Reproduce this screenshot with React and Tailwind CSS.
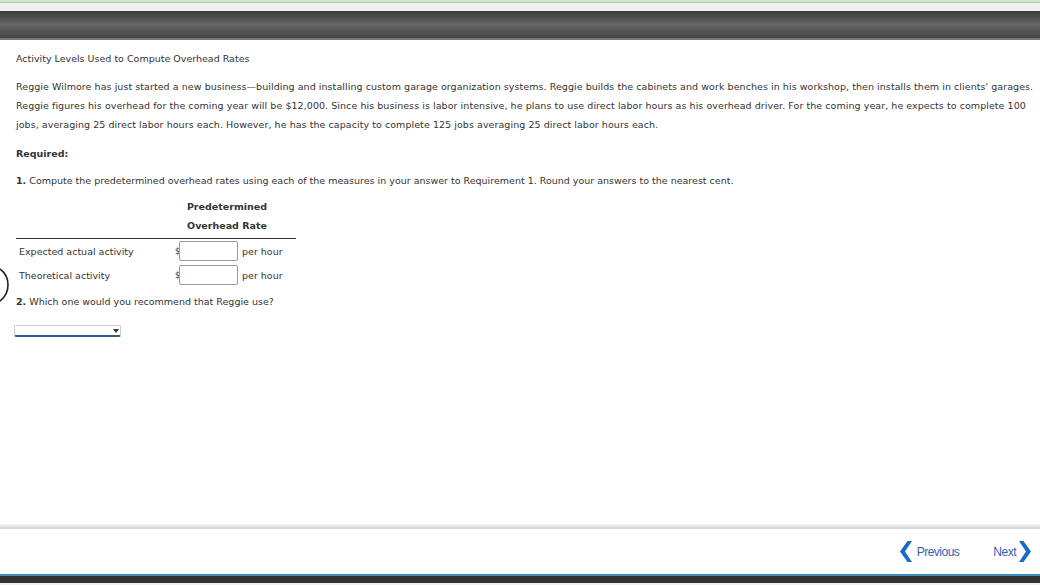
const rows = [
  { label: "Expected actual activity" },
  { label: "Theoretical activity" },
];

function Chevron({ dir }) {
  return (
    <svg width="12" height="21" viewBox="0 0 12 21">
      <path
        d={dir === "left" ? "M12 0 L5 10.5 L12 21 L7.5 21 L0 10.5 L7.5 0 Z" : "M0 0 L7 10.5 L0 21 L4.5 21 L12 10.5 L4.5 0 Z"}
        fill="#1a6cc2"
      />
    </svg>
  );
}

export default function App() {
  return (
    <div className="relative w-[1040px] h-[585px] overflow-hidden bg-white text-[#333] font-['DejaVu_Sans',Verdana,sans-serif] flex flex-col">
      {/* top strips */}
      <div className="h-[3px] bg-[#cfe6cf] border-b border-[#a9c9a9]" />
      <div className="h-[8px] bg-[#f0f0f0]" />
      <div className="h-[29px] bg-gradient-to-b from-[#3a3a3a] via-[#666] to-[#444] border-b-2 border-[#777]" />

      {/* content */}
      <div className="flex-1 pl-4 pr-[3px] pt-[9px] text-[9.5px] leading-[19px]">
        <p>Activity Levels Used to Compute Overhead Rates</p>
        <p className="mt-[9px] tracking-[0.06px]">
          Reggie Wilmore has just started a new business—building and installing custom garage organization systems. Reggie builds the cabinets and work benches in his workshop, then installs them in clients' garages. Reggie figures his overhead for the coming year will be $12,000. Since his business is labor intensive, he plans to use direct labor hours as his overhead driver. For the coming year, he expects to complete 100 jobs, averaging 25 direct labor hours each. However, he has the capacity to complete 125 jobs averaging 25 direct labor hours each.
        </p>
        <p className="mt-[10px] font-bold">Required:</p>
        <p className="mt-[8px]">
          <b>1.</b> Compute the predetermined overhead rates using each of the measures in your answer to Requirement 1. Round your answers to the nearest cent.
        </p>

        <div className="mt-[7px] w-[280px]">
          <div className="border-b border-[#333] pl-[166px] pb-[3px] font-bold text-center whitespace-nowrap">
            <div className="w-[90px]">Predetermined</div>
            <div className="w-[90px]">Overhead Rate</div>
          </div>
          {rows.map((r) => (
            <div key={r.label} className="flex items-center h-[24px] pl-[3px]">
              <span className="w-[156px]">{r.label}</span>
              <span className="text-[8px] w-[4px]">$</span>
              <input
                type="text"
                className="w-[59px] h-[20px] border border-[#999] rounded-[2px] bg-white"
              />
              <span className="ml-[4px]">per hour</span>
            </div>
          ))}
        </div>

        <p className="mt-[5px]">
          <b>2.</b> Which one would you recommend that Reggie use?
        </p>
        <div className="mt-[14px] -ml-[2px] w-[107px] h-[12px] border border-[#ccc] border-b-2 border-b-[#2e5f8a] rounded-[2px] flex justify-end items-center pr-[1px]">
          <svg width="6" height="4" viewBox="0 0 6 4">
            <path d="M0 0 L6 0 L3 4 Z" fill="#333" />
          </svg>
        </div>
      </div>

      {/* partial circle at left edge */}
      <svg className="absolute left-0 top-[267px]" width="11" height="36" viewBox="0 0 11 36">
        <path d="M0 2 A20 20 0 0 1 0 34" fill="none" stroke="#222" strokeWidth="1.6" />
      </svg>

      {/* footer */}
      <div className="h-[5px] bg-gradient-to-b from-[#f4f4f4] to-[#d2d2d2]" />
      <div className="h-[45px] flex items-center justify-end pr-[9px] gap-[34px] text-[12px] text-[#2f5fb3] font-['Liberation_Sans',sans-serif]">
        <button className="flex items-center gap-[5px]">
          <Chevron dir="left" />
          <span className="tracking-[-0.5px]">Previous</span>
        </button>
        <button className="flex items-center gap-[3px]">
          <span className="tracking-[-0.5px]">Next</span>
          <Chevron dir="right" />
        </button>
      </div>
      <div className="h-[2px] bg-[#3f8fc4]" />
      <div className="h-[7px] bg-[#333]" />
      <div className="h-[2px] bg-[#eee]" />
    </div>
  );
}
